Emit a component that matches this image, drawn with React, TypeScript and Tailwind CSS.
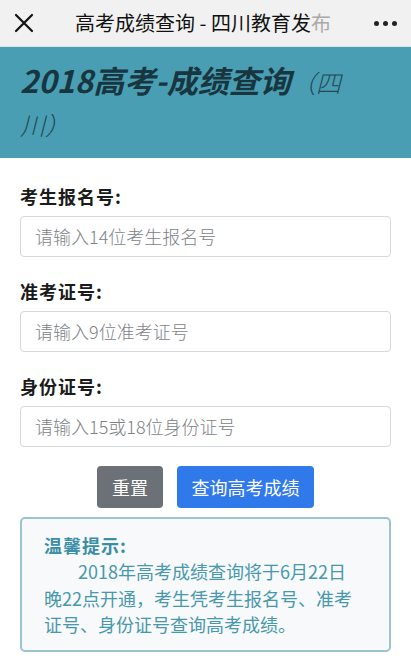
import React from 'react';

const FONT = '"Noto Sans CJK SC", "Noto Sans", sans-serif';

function Field({ label, placeholder }: { label: string; placeholder: string }) {
  return (
    <div className="flex flex-col">
      <div className="h-[26px] text-[18px] leading-[26px] font-bold tracking-[1px] text-[#1b1b1b]">
        {label}
      </div>
      <div className="mt-[7px] flex h-[41px] items-center rounded-[4px] border border-[#d6d9dc] bg-white px-[14px]">
        <span className="text-[18px] font-light text-[#7d8287]">{placeholder}</span>
      </div>
    </div>
  );
}

export default function App() {
  return (
    <div className="w-[411px] h-[663px] overflow-hidden bg-white" style={{ fontFamily: FONT }}>
      {/* top bar */}
      <div className="flex h-[46px] items-center bg-[#f1f1f1] px-[14px]">
        <svg width="20" height="20" viewBox="0 0 20 20" className="shrink-0">
          <path d="M2 2 L18 18 M18 2 L2 18" stroke="#111" strokeWidth="2.2" strokeLinecap="round" />
        </svg>
        <div className="ml-[41px] whitespace-nowrap text-[20px] leading-none text-[#111]">
          高考成绩查询 - 四川教育发<span className="text-[#aaa]">布</span>
        </div>
        <div className="ml-auto flex gap-[4px]">
          <span className="h-[5px] w-[5px] rounded-full bg-[#222]" />
          <span className="h-[5px] w-[5px] rounded-full bg-[#222]" />
          <span className="h-[5px] w-[5px] rounded-full bg-[#222]" />
        </div>
      </div>
      <div className="h-px bg-[#d8e4e8]" />

      {/* header */}
      <div className="h-[111px] bg-[#4a9eb3] pl-[20px] pr-[45px] pt-[13px]">
        <div className="text-[31px] leading-[39px] italic text-[#173640]">
          <span className="font-bold">2018高考-成绩查询</span>
          <span className="text-[25px] font-light text-[#234a55]">（四川）</span>
        </div>
      </div>

      {/* form */}
      <div className="flex flex-col gap-[21px] px-[20px] pt-[25px]">
        <Field label="考生报名号:" placeholder="请输入14位考生报名号" />
        <Field label="准考证号:" placeholder="请输入9位准考证号" />
        <Field label="身份证号:" placeholder="请输入15或18位身份证号" />
      </div>

      <div className="mt-[19px] flex justify-center gap-[14px]">
        <button className="h-[42px] w-[66px] rounded-[4px] bg-[#6c7178] text-[18px] text-white">重置</button>
        <button className="h-[42px] w-[137px] rounded-[4px] bg-[#3079ea] text-[18px] text-white">查询高考成绩</button>
      </div>

      <div className="mx-[20px] mt-[9px] h-[135px] rounded-[5px] border-2 border-[#9cc4cc] bg-[#f8f9fa] pl-[22px] pr-[26px] pt-[13px]">
        <div className="text-[18px] leading-[26px] font-bold tracking-[1px] text-[#3a8fa6]">温馨提示:</div>
        <p className="text-[18px] leading-[26.5px] text-[#4798ad] indent-[34px]">
          2018年高考成绩查询将于6月22日晚22点开通，考生凭考生报名号、准考证号、身份证号查询高考成绩。
        </p>
      </div>
    </div>
  );
}
